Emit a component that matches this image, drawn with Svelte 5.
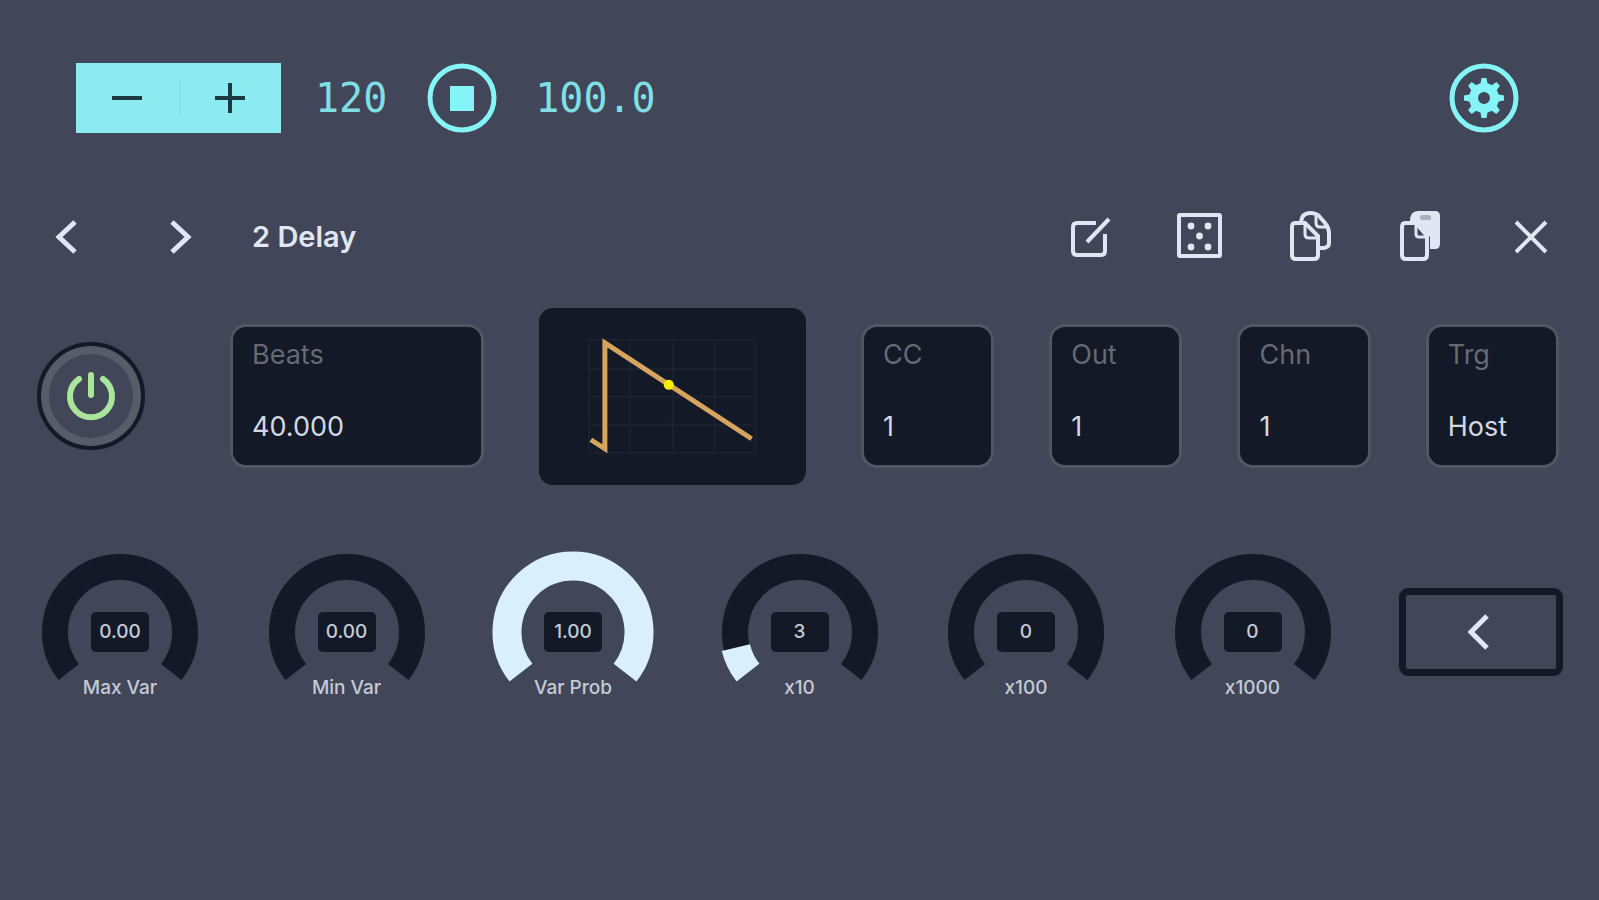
<script lang="ts">
  interface Knob {
    label: string;
    value: string;
    amount: number;
  }

  let tempo = $state(120);
  let playing = $state(true);
  let enabled = $state(true);

  let fields = $state([
    { id: 'cc', label: 'CC', value: '1' },
    { id: 'out', label: 'Out', value: '1' },
    { id: 'chn', label: 'Chn', value: '1' },
    { id: 'trg', label: 'Trg', value: 'Host' },
  ]);

  let knobs: Knob[] = $state([
    { label: 'Max Var', value: '0.00', amount: 0 },
    { label: 'Min Var', value: '0.00', amount: 0 },
    { label: 'Var Prob', value: '1.00', amount: 1 },
    { label: 'x10', value: '3', amount: 0.095 },
    { label: 'x100', value: '0', amount: 0 },
    { label: 'x1000', value: '0', amount: 0 },
  ]);

  const START = 142;
  const SWEEP = 256;

  function arc(radius: number, amount: number) {
    const a = (START * Math.PI) / 180;
    const b = ((START + SWEEP * amount) * Math.PI) / 180;
    const large = SWEEP * amount > 180 ? 1 : 0;
    const x1 = 80 + radius * Math.cos(a);
    const y1 = 80 + radius * Math.sin(a);
    const x2 = 80 + radius * Math.cos(b);
    const y2 = 80 + radius * Math.sin(b);
    return `M${x1} ${y1}A${radius} ${radius} 0 ${large} 1 ${x2} ${y2}`;
  }
</script>

<main class="app">
  <header class="transport">
    <div class="stepper">
      <button aria-label="Decrease tempo" onclick={() => (tempo -= 1)}>
        <svg width="32" height="32" viewBox="0 0 32 32"><path d="M1 16h30"></path></svg>
      </button>
      <button aria-label="Increase tempo" onclick={() => (tempo += 1)}>
        <svg width="32" height="32" viewBox="0 0 32 32"><path d="M1 16h30M16 1v30"></path></svg>
      </button>
    </div>
    <output class="readout tempo">{tempo}</output>
    <button class="round" aria-label="Stop" onclick={() => (playing = !playing)}>
      <svg width="70" height="70" viewBox="0 0 70 70">
        <circle cx="35" cy="35" r="32" fill="none" stroke="currentColor" stroke-width="5"></circle>
        <rect x="23" y="23" width="24" height="25" fill="currentColor"></rect>
      </svg>
    </button>
    <output class="readout position">100.0</output>
    <button class="round settings" aria-label="Settings">
      <svg width="70" height="70" viewBox="0 0 70 70">
        <circle cx="35" cy="35" r="32" fill="none" stroke="currentColor" stroke-width="5"></circle>
        <circle cx="35" cy="35" r="10.5" fill="none" stroke="currentColor" stroke-width="9"></circle>
        {#each [0, 45, 90, 135, 180, 225, 270, 315] as angle}
          <path d="M31 23L32.5 15h5L39 23z" fill="currentColor" transform="rotate({angle} 35 35)"></path>
        {/each}
      </svg>
    </button>
  </header>

  <nav class="toolbar">
    <button class="icon" aria-label="Previous">
      <svg width="56" height="56" viewBox="0 0 56 56"><path d="M38 13L22 28L38 43" stroke-width="5"></path></svg>
    </button>
    <button class="icon next" aria-label="Next">
      <svg width="56" height="56" viewBox="0 0 56 56"><path d="M18 13L34 28L18 43" stroke-width="5"></path></svg>
    </button>
    <h1>2 Delay</h1>
    <div class="tools">
      <button class="icon" aria-label="Edit">
        <svg width="56" height="56" viewBox="0 0 56 56">
          <path d="M33 14H14Q10 14 10 18V42Q10 46 14 46H38Q42 46 42 42V25" stroke-width="4"></path>
          <path d="M24 33L46 10" stroke-width="4"></path>
        </svg>
      </button>
      <button class="icon" aria-label="Randomize">
        <svg width="56" height="56" viewBox="0 0 56 56">
          <rect x="6" y="6" width="41" height="41" rx="1" stroke-width="4"></rect>
          <g fill="currentColor" stroke="none">
            <circle cx="18" cy="17" r="3.4"></circle>
            <circle cx="35" cy="17" r="3.4"></circle>
            <circle cx="26.5" cy="27" r="3.4"></circle>
            <circle cx="18" cy="38" r="3.4"></circle>
            <circle cx="35" cy="38" r="3.4"></circle>
          </g>
        </svg>
      </button>
      <button class="icon" aria-label="Copy">
        <svg width="56" height="56" viewBox="0 0 56 56" stroke-width="4">
          <path d="M22 14H12Q9 14 9 18V46Q9 50 13 50H31Q35 50 35 46V27z"></path>
          <path d="M22 15V25Q22 29 26 29H34" stroke-width="3"></path>
          <path d="M18 13Q19 4 27 4Q33 4 36 7L42 14Q46 19 46 24V34Q46 38 41 39H37"></path>
          <path d="M33 6V14Q33 18 37 18H44" stroke-width="3"></path>
        </svg>
      </button>
      <button class="icon" aria-label="Paste">
        <svg width="56" height="56" viewBox="0 0 56 56" stroke-width="4">
          <path d="M17 12Q17 2 25 2H42Q47 2 47 7V35Q47 40 42 40H37V28L23 12z" fill="currentColor" stroke="none"></path>
          <path d="M23 14H12Q9 14 9 18V46Q9 50 13 50H30Q34 50 34 46V27z"></path>
          <path d="M23 15V25Q23 28 26 28H34" stroke-width="3"></path>
          <rect class="clip" x="27" y="6" width="11" height="5" rx="2" stroke="none"></rect>
        </svg>
      </button>
      <button class="icon" aria-label="Close">
        <svg width="56" height="56" viewBox="0 0 56 56"><path d="M13 13L43 43M43 13L13 43" stroke-width="4"></path></svg>
      </button>
    </div>
  </nav>

  <section class="settings-row">
    <button class="power" class:off={!enabled} aria-label="Power" onclick={() => (enabled = !enabled)}>
      <svg width="56" height="56" viewBox="0 0 56 56">
        <path d="M16 11A21 21 0 1 0 40 11M28 7V27"></path>
      </svg>
    </button>
    <label class="field">
      <span>Beats</span>
      <input type="text" value="40.000" />
    </label>
    <div class="chart">
      <svg viewBox="0 0 267 177" role="img" aria-label="Ramp down waveform">
        <path class="grid" d="M50 32V145M91 32V145M134 32V145M176 32V145M217 32V145M50 32H217M50 61H217M50 89H217M50 117H217M50 145H217"></path>
        <path class="wave" d="M52 132L66 141V35L213 131"></path>
        <circle cx="130" cy="77" r="5"></circle>
      </svg>
    </div>
    {#each fields as field (field.id)}
      <label class="field">
        <span>{field.label}</span>
        <input type="text" bind:value={field.value} />
      </label>
    {/each}
  </section>

  <section class="knobs">
    {#each knobs as knob (knob.label)}
      <label class="knob">
        <svg width="160" height="124" viewBox="0 0 160 124">
          <path class="track" d={arc(65, 1)}></path>
          {#if knob.amount > 0}
            <path class="level" d={arc(66, knob.amount)}></path>
          {/if}
        </svg>
        <input type="text" bind:value={knob.value} />
        <span>{knob.label}</span>
      </label>
    {/each}
    <button class="back" aria-label="Back">
      <svg width="56" height="56" viewBox="0 0 56 56"><path d="M34 12L18 28L34 44" stroke-width="5"></path></svg>
    </button>
  </section>
</main>

<style>
  :global(body) {
    background: #414658;
  }

  .app {
    --dark: #131926;
    --light: #e0e6f3;
    --cyan: #84f4f6;
    box-sizing: border-box;
    min-height: 100vh;
    padding-top: 63px;
    font-family: Inter, 'Liberation Sans', sans-serif;
    color: var(--light);
  }

  button,
  input {
    font: inherit;
    color: inherit;
    border: 0;
    padding: 0;
    background: none;
  }

  button {
    cursor: pointer;
  }

  svg {
    display: block;
  }

  .transport {
    display: flex;
    align-items: center;
    padding: 0 80px 0 76px;
    color: var(--cyan);
  }

  .stepper {
    display: flex;
    width: 205px;
    height: 70px;
    background: #8bebf0;
  }

  .stepper button {
    flex: 1;
    display: grid;
    place-items: center;
  }

  .stepper path {
    stroke: #1c3a42;
    stroke-width: 4;
  }

  .stepper button + button {
    background: linear-gradient(#83e2e8, #83e2e8) left center / 2px 36px no-repeat;
  }

  .readout {
    font: 40px/70px 'DejaVu Sans Mono', monospace;
    color: #80dfe4;
  }

  .tempo {
    margin: 0 40px 0 34px;
  }

  .position {
    margin-left: 38px;
  }

  .settings {
    margin-left: auto;
  }

  .toolbar {
    display: flex;
    align-items: center;
    padding: 0 40px 0 37px;
    margin-top: 76px;
  }

  .icon svg,
  .back svg {
    fill: none;
    stroke: currentColor;
  }

  .next {
    margin-left: 61px;
  }

  h1 {
    margin: 0 0 0 42px;
    font-size: 29px;
    line-height: 36px;
    font-weight: 600;
  }

  .tools {
    display: flex;
    gap: 54px;
    margin-left: auto;
  }

  .clip {
    fill: #a9afbf;
  }

  .settings-row {
    display: grid;
    grid-template-columns: 138px 254fr 266fr repeat(4, 133fr);
    gap: 55px;
    align-items: center;
    padding: 0 40px 0 37px;
    margin-top: 43px;
  }

  .power {
    display: grid;
    place-items: center;
    box-sizing: border-box;
    width: 108px;
    height: 108px;
    border: 4px solid var(--dark);
    border-radius: 50%;
    box-shadow: inset 0 0 0 8px #585c69;
  }

  .power path {
    fill: none;
    stroke: #a9e69b;
    stroke-width: 6;
    stroke-linecap: round;
  }

  .power.off path {
    stroke: #6d717c;
  }

  .field {
    display: flex;
    flex-direction: column;
    justify-content: space-between;
    box-sizing: border-box;
    min-width: 0;
    height: 144px;
    padding: 10px 19px 20px;
    border: 3px solid #525664;
    border-radius: 16px;
    background: var(--dark);
    font-size: 27px;
    line-height: 36px;
  }

  .field span {
    color: #666a74;
  }

  .field input {
    width: 100%;
    height: 36px;
    color: #d3d8e2;
  }

  .chart {
    border-radius: 14px;
    background: var(--dark);
  }

  .chart svg {
    width: 100%;
  }

  .grid {
    stroke: #1b212e;
    stroke-width: 2;
  }

  .wave {
    fill: none;
    stroke: #d6a45d;
    stroke-width: 5;
  }

  .chart circle {
    fill: #f4f000;
  }

  .knobs {
    display: flex;
    justify-content: space-between;
    padding: 0 36px 0 40px;
    margin-top: 67px;
  }

  .knob {
    display: grid;
    justify-items: center;
    align-content: start;
    width: 160px;
    font-size: 19px;
    line-height: 24px;
    font-weight: 500;
    color: #c5cad6;
  }

  .knob svg,
  .knob input {
    grid-area: 1 / 1;
  }

  .knob svg {
    overflow: visible;
  }

  .knob input {
    width: 58px;
    height: 40px;
    margin-top: 60px;
    border-radius: 5px;
    background: var(--dark);
    text-align: center;
  }

  .track,
  .level {
    fill: none;
    stroke: var(--dark);
    stroke-width: 26;
  }

  .level {
    stroke: #d9f0fc;
    stroke-width: 29;
  }

  .back {
    display: grid;
    place-items: center;
    box-sizing: border-box;
    width: 164px;
    height: 88px;
    margin-top: 36px;
    border: 7px solid var(--dark);
    border-radius: 9px;
  }
</style>
